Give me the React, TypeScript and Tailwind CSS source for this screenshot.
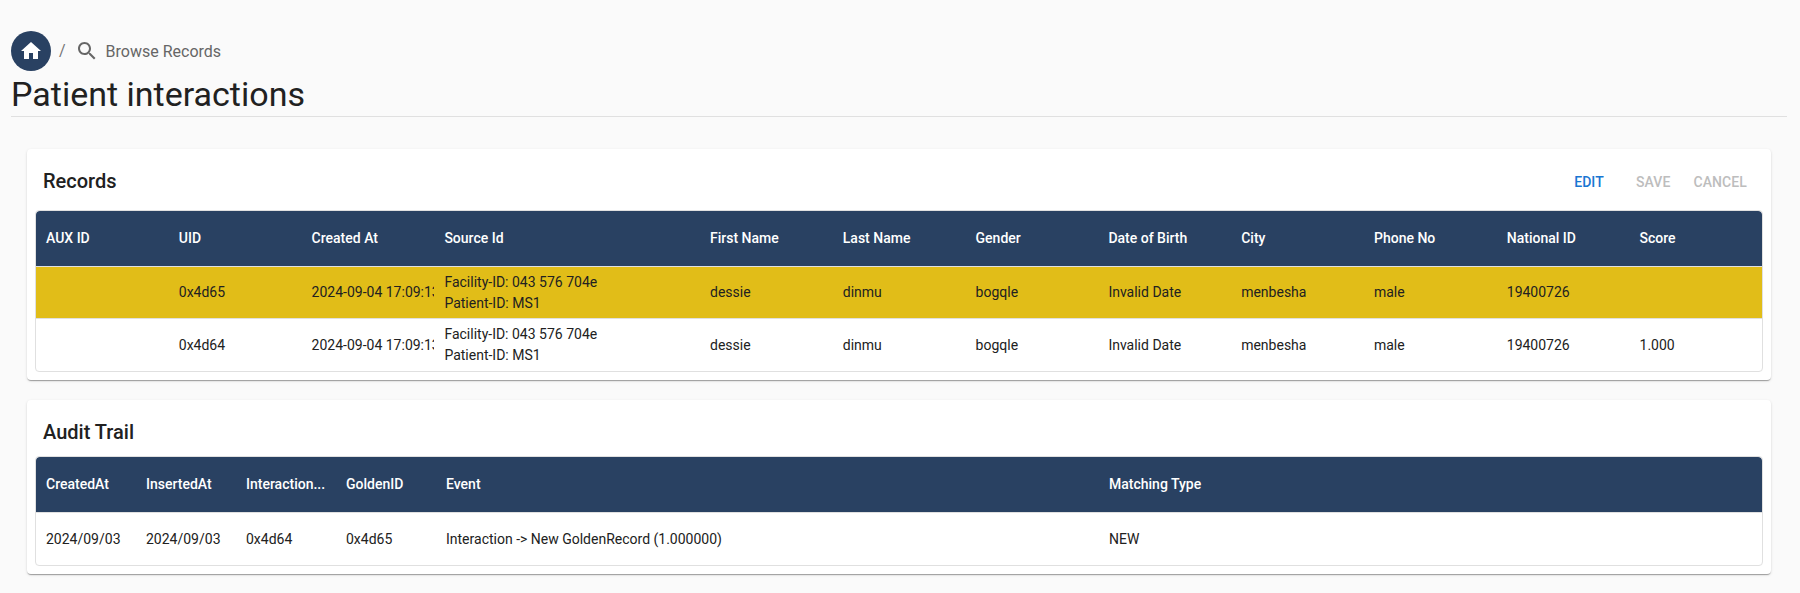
import React from "react";

const recCols = ["w-[132.8px]","w-[132.8px]","w-[132.8px]","w-[265.6px]","w-[132.8px]","w-[132.8px]","w-[132.8px]","w-[132.8px]","w-[132.8px]","w-[132.8px]","w-[132.8px]","w-[132.8px]"];
const recHead = ["AUX ID","UID","Created At","Source Id","First Name","Last Name","Gender","Date of Birth","City","Phone No","National ID","Score"];
const source = (
  <div className="leading-[21px]">
    <div>Facility-ID: 043 576 704e</div>
    <div>Patient-ID: MS1</div>
  </div>
);
const row = (uid: string, score: string) => ["", uid, "2024-09-04 17:09:13", source, "dessie", "dinmu", "bogqle", "Invalid Date", "menbesha", "male", "19400726", score];

const audCols = ["w-[100px]","w-[100px]","w-[100px]","w-[100px]","w-[663px]","w-[200px]"];
const audHead = ["CreatedAt","InsertedAt","Interaction...","GoldenID","Event","Matching Type"];
const audRow = ["2024/09/03","2024/09/03","0x4d64","0x4d65","Interaction -> New GoldenRecord (1.000000)","NEW"];

function Cell({ w, children }: { w: string; children?: React.ReactNode }) {
  return <div className={`${w} shrink-0 px-[10px] overflow-hidden whitespace-nowrap`}>{children}</div>;
}

function Header({ cols, head }: { cols: string[]; head: string[] }) {
  return (
    <div className="flex h-[56px] items-center bg-[#294162] text-white font-medium rounded-t-[4px] border-b border-[#e0e0e0]">
      {head.map((h, i) => <Cell key={h} w={cols[i]}>{h}</Cell>)}
    </div>
  );
}

function Card({ children }: { children: React.ReactNode }) {
  return <section className="bg-white rounded-[4px] px-[8px] shadow-[0_2px_1px_-1px_rgba(0,0,0,0.2),0_1px_1px_0_rgba(0,0,0,0.14),0_1px_3px_0_rgba(0,0,0,0.12)]">{children}</section>;
}

export default function App() {
  return (
    <div className="min-h-[593px] bg-[#fafafa] text-[14px] text-[#212121] font-['Roboto',sans-serif] overflow-hidden">
      <div className="pt-[31px] px-[11px]">
        <div className="flex items-center h-[40px] text-[#666666]">
          <div className="w-[40px] h-[40px] rounded-full bg-[#294162] flex items-center justify-center">
            <svg viewBox="0 0 24 24" className="w-[24px] h-[24px] fill-white"><path d="M10 20v-6h4v6h5v-8h3L12 3 2 12h3v8z" /></svg>
          </div>
          <span className="ml-[8px] text-[16px] text-[#757575]">/</span>
          <svg viewBox="0 0 24 24" className="ml-[9px] w-[24px] h-[24px] fill-[#666666]"><path d="M15.5 14h-.79l-.28-.27C15.41 12.59 16 11.11 16 9.5 16 5.91 13.09 3 9.5 3S3 5.91 3 9.5 5.91 16 9.5 16c1.61 0 3.09-.59 4.23-1.57l.27.28v.79l5 4.99L20.49 19l-4.99-5zm-6 0C7.01 14 5 11.99 5 9.5S7.01 5 9.5 5 14 7.01 14 9.5 11.99 14 9.5 14z" /></svg>
          <span className="ml-[7px] pt-[2px] text-[16px]">Browse Records</span>
        </div>
        <h1 className="mt-[2px] text-[34px] leading-[42px] font-normal text-[#212121]">Patient interactions</h1>
        <div className="h-px bg-[#e0e0e0] mr-[2px] mt-[1px]" />
      </div>

      <div className="px-[27px] mt-[32px] mr-[2px] flex flex-col gap-[20px]">
        <Card>
          <div className="flex items-center justify-between h-[61px] pt-[2px] pl-[8px] pr-[16px]">
            <h2 className="text-[20px] font-medium">Records</h2>
            <div className="flex items-center mt-[3px] text-[14px] font-medium tracking-[0.1px] text-[#bdbdbd]">
              <span className="text-[#1976d2]">EDIT</span>
              <span className="ml-[32px]">SAVE</span>
              <span className="ml-[23px]">CANCEL</span>
            </div>
          </div>
          <div className="mb-[8px] rounded-[4px] border border-[#e0e0e0] overflow-hidden">
            <Header cols={recCols} head={recHead} />
            <div className="flex h-[52px] items-center bg-[#e1bd18] border-b border-[#e0e0e0]">
              {row("0x4d65", "").map((c, i) => <Cell key={i} w={recCols[i]}>{c}</Cell>)}
            </div>
            <div className="flex h-[52px] items-center">
              {row("0x4d64", "1.000").map((c, i) => <Cell key={i} w={recCols[i]}>{c}</Cell>)}
            </div>
          </div>
        </Card>
        <Card>
          <div className="flex items-center h-[56px] pt-[7px] pl-[8px]">
            <h2 className="text-[20px] font-medium">Audit Trail</h2>
          </div>
          <div className="mb-[8px] rounded-[4px] border border-[#e0e0e0] overflow-hidden">
            <Header cols={audCols} head={audHead} />
            <div className="flex h-[52px] items-center">
              {audRow.map((c, i) => <Cell key={i} w={audCols[i]}>{c}</Cell>)}
            </div>
          </div>
        </Card>
      </div>
    </div>
  );
}
